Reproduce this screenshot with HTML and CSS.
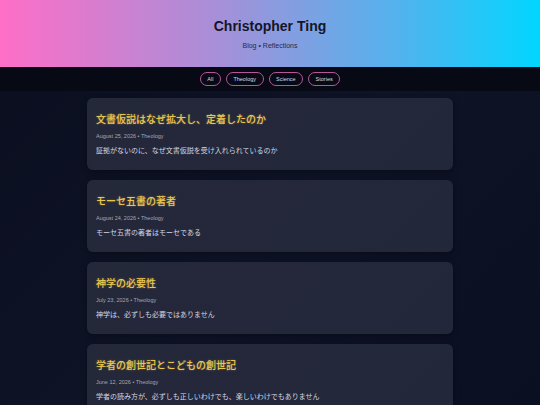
FILE: index.html
```html
<!DOCTYPE html>
<html lang="ja">
<head>
<meta charset="utf-8">
<title>Christopher Ting</title>
<link rel="stylesheet" href="styles.css">
</head>
<body>
<header class="hero">
  <h1 class="hero-title">Christopher Ting</h1>
  <p class="hero-sub">Blog • Reflections</p>
</header>
<nav class="filters">
  <a class="pill">All</a>
  <a class="pill">Theology</a>
  <a class="pill">Science</a>
  <a class="pill">Stories</a>
</nav>
<main class="posts">
  <article class="card">
    <h2 class="card-title">文書仮説はなぜ拡大し、定着したのか</h2>
    <p class="card-meta">August 25, 2026 • Theology</p>
    <p class="card-excerpt">証拠がないのに、なぜ文書仮説を受け入れられているのか</p>
  </article>
  <article class="card">
    <h2 class="card-title">モーセ五書の著者</h2>
    <p class="card-meta">August 24, 2026 • Theology</p>
    <p class="card-excerpt">モーセ五書の著者はモーセである</p>
  </article>
  <article class="card">
    <h2 class="card-title">神学の必要性</h2>
    <p class="card-meta">July 23, 2026 • Theology</p>
    <p class="card-excerpt">神学は、必ずしも必要ではありません</p>
  </article>
  <article class="card">
    <h2 class="card-title">学者の創世記とこどもの創世記</h2>
    <p class="card-meta">June 12, 2026 • Theology</p>
    <p class="card-excerpt">学者の読み方が、必ずしも正しいわけでも、楽しいわけでもありません</p>
  </article>
</main>
</body>
</html>
```
FILE: styles.css
```css
html, body {
  margin: 0;
  padding: 0;
}
body {
  background: linear-gradient(135deg, #0a0e1f 0%, #0e1326 50%, #0a0f22 100%);
  font-family: "Liberation Sans", Arial, "Noto Sans CJK JP", sans-serif;
  min-height: 405px;
  overflow: hidden;
}
.hero {
  height: 67px;
  box-sizing: border-box;
  padding-top: 17px;
  text-align: center;
  background: linear-gradient(90deg, #ff6ec7 0%, #a78fd8 40%, #4fb4ee 75%, #00d6ff 100%);
}
.hero-title {
  margin: 0;
  font-size: 14px;
  line-height: 18px;
  font-weight: 700;
  color: #141529;
}
.hero-sub {
  margin: 6px 0 0;
  font-size: 7px;
  line-height: 10px;
  color: #262a48;
}
.filters {
  height: 24px;
  display: flex;
  justify-content: center;
  align-items: center;
  gap: 5px;
  background: #070914;
}
.pill {
  display: inline-flex;
  align-items: center;
  height: 14px;
  box-sizing: border-box;
  padding: 0 6.5px;
  border: 1px solid #b8569a;
  border-radius: 8px;
  font-size: 5.5px;
  color: #d9dbe8;
}
.posts {
  width: 366px;
  margin: 0 auto;
  padding-top: 7px;
  display: flex;
  flex-direction: column;
  gap: 10px;
}
.card {
  background: linear-gradient(135deg, #242839 0%, #22273a 100%);
  border-radius: 6px;
  padding: 14px 9px 15px;
  box-shadow: 0 2px 6px rgba(0, 0, 0, 0.35);
}
.card-title {
  margin: 0;
  font-family: "Noto Sans CJK JP", sans-serif;
  font-size: 10px;
  line-height: 14px;
  font-weight: 500;
  color: #ecc550;
  text-shadow: 0 0 2px rgba(236, 197, 80, 0.45);
}
.card-meta {
  margin: 6px 0 0;
  font-size: 5.5px;
  line-height: 8px;
  color: #a3a7b8;
}
.card-excerpt {
  margin: 5px 0 0;
  font-family: "Noto Sans CJK JP", sans-serif;
  font-size: 7px;
  line-height: 10px;
  color: #d3d6e2;
}
```
